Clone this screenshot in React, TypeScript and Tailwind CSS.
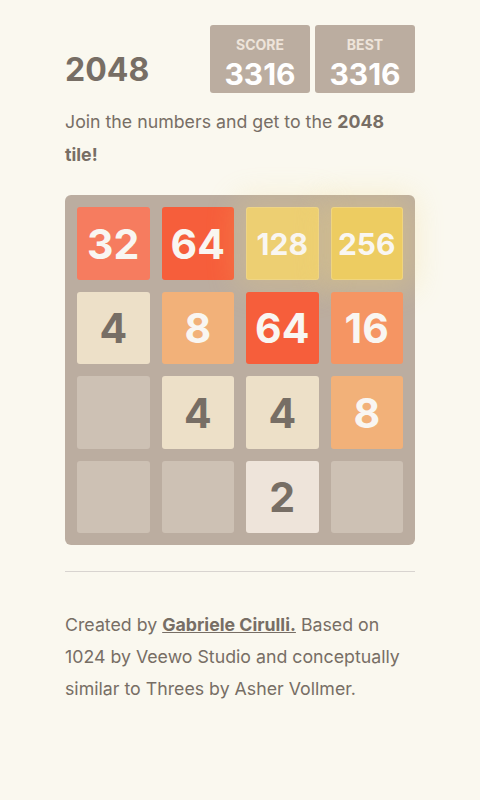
const tileStyles: Record<number, string> = {
  0: "bg-[#cdc1b4]",
  2: "bg-[#eee4da] text-[#776e65] text-[41px]",
  4: "bg-[#ede0c8] text-[#776e65] text-[41px]",
  8: "bg-[#f2b179] text-[#f9f6f2] text-[41px]",
  16: "bg-[#f59563] text-[#f9f6f2] text-[41px]",
  32: "bg-[#f67c5f] text-[#f9f6f2] text-[41px]",
  64: "bg-[#f65e3b] text-[#f9f6f2] text-[41px]",
  128: "bg-[#edcf72] text-[#f9f6f2] text-[30px] shadow-[0_0_30px_10px_rgba(243,215,116,0.24),inset_0_0_0_1px_rgba(255,255,255,0.14)]",
  256: "bg-[#edcc61] text-[#f9f6f2] text-[30px] shadow-[0_0_30px_10px_rgba(243,215,116,0.32),inset_0_0_0_1px_rgba(255,255,255,0.19)]",
};

const board = [
  [32, 64, 128, 256],
  [4, 8, 64, 16],
  [0, 4, 4, 8],
  [0, 0, 2, 0],
];

function Tile({ value }: { value: number }) {
  return (
    <div
      className={`flex h-[72.5px] w-[72.5px] items-center justify-center rounded-[3px] pt-[2px] font-bold ${tileStyles[value]}`}
    >
      {value > 0 ? value : ""}
    </div>
  );
}

function ScoreBox({ label, value }: { label: string; value: number }) {
  return (
    <div className="flex h-[68px] w-[100px] flex-col items-center rounded-[3px] bg-[#bbada0] pt-[13px]">
      <span className="text-[14px] font-bold uppercase leading-none text-[#eee4da]">{label}</span>
      <span className="mt-[7px] text-[30px] font-bold leading-none text-white">{value}</span>
    </div>
  );
}

export default function App() {
  return (
    <div className="min-h-[800px] bg-[#faf8ef] font-['Inter','Noto_Sans',sans-serif] text-[#776e65]">
      <div className="mx-auto w-[350px] pt-[25px]">
        {/* header */}
        <div className="flex items-center justify-between">
          <h1 className="mt-[22px] text-[32px] font-bold leading-none">2048</h1>
          <div className="flex gap-[5px]">
            <ScoreBox label="Score" value={3316} />
            <ScoreBox label="Best" value={3316} />
          </div>
        </div>

        <p className="mt-[12px] text-[17.75px] leading-[33px]">
          Join the numbers and get to the <strong className="font-bold">2048 tile!</strong>
        </p>

        {/* game board */}
        <div className="mt-[24px] grid grid-cols-4 gap-[12px] rounded-[6px] bg-[#bbada0] p-[12px]">
          {board.flat().map((v, i) => (
            <Tile key={i} value={v} />
          ))}
        </div>

        <hr className="mt-[26px] border-t border-[#d8d4d0]" />

        <p className="mt-[37px] text-[17.75px] leading-[32px]">
          Created by{" "}
          <a href="#" className="font-bold underline">
            Gabriele Cirulli.
          </a>{" "}
          Based on 1024 by Veewo Studio and conceptually similar to Threes by Asher Vollmer.
        </p>
      </div>
    </div>
  );
}
